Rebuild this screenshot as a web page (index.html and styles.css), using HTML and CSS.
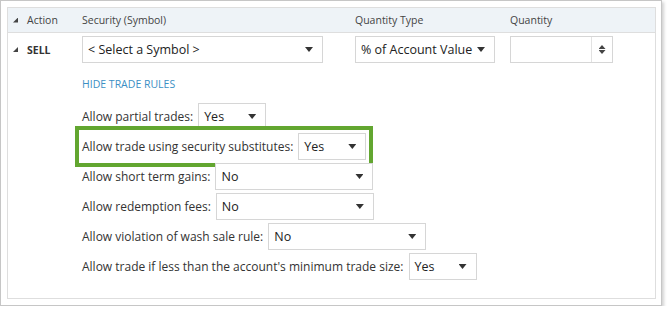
FILE: index.html
```html
<!DOCTYPE html>
<html lang="en">
<head>
    <meta charset="UTF-8">
    <title>Trade Rules</title>
    <link rel="stylesheet" href="styles.css">
</head>
<body>

    <div class="frame">
        <div class="panel">

            <!-- column headers -->
            <div class="head">
                <div class="col-action"><span class="tri"></span>Action</div>
                <div class="col-security">Security (Symbol)</div>
                <div class="col-qtype">Quantity Type</div>
                <div class="col-qty">Quantity</div>
            </div>

            <!-- trade row -->
            <div class="trade">
                <div class="col-action sell"><span class="tri"></span>SELL</div>
                <div class="col-security">
                    <div class="dd w-symbol"><span class="val">&lt; Select a Symbol &gt;</span><span class="caret"></span></div>
                </div>
                <div class="col-qtype">
                    <div class="dd w-qtype"><span class="val">% of Account Value</span><span class="caret"></span></div>
                </div>
                <div class="col-qty">
                    <div class="spin">
                        <span class="spin-field"></span>
                        <span class="spin-btn"><span class="up"></span><span class="down"></span></span>
                    </div>
                </div>
            </div>

            <div class="rules">
                <a class="hide-link">HIDE TRADE RULES</a>

                <div class="rule">
                    <label>Allow partial trades:</label>
                    <div class="dd w-short"><span class="val">Yes</span><span class="caret"></span></div>
                </div>

                <div class="rule highlight">
                    <label>Allow trade using security substitutes:</label>
                    <div class="dd w-short"><span class="val">Yes</span><span class="caret"></span></div>
                </div>

                <div class="rule">
                    <label>Allow short term gains:</label>
                    <div class="dd w-long"><span class="val">No</span><span class="caret"></span></div>
                </div>

                <div class="rule">
                    <label>Allow redemption fees:</label>
                    <div class="dd w-long"><span class="val">No</span><span class="caret"></span></div>
                </div>

                <div class="rule">
                    <label>Allow violation of wash sale rule:</label>
                    <div class="dd w-long"><span class="val">No</span><span class="caret"></span></div>
                </div>

                <div class="rule">
                    <label>Allow trade if less than the account's minimum trade size:</label>
                    <div class="dd w-short"><span class="val">Yes</span><span class="caret"></span></div>
                </div>
            </div>

        </div>
    </div>

</body>
</html>
```

FILE: styles.css
```css
* { margin: 0; padding: 0; box-sizing: border-box; }

body {
    background: #ffffff;
    font-family: 'Open Sans', 'Noto Sans', sans-serif;
    color: #333333;
}

.frame {
    width: 662px;
    height: 306px;
    border: 1px solid #c6c6c6;
    box-shadow: 2px 2px 3px rgba(0, 0, 0, 0.18);
    padding: 6px 5px 6px 6px;
}

.panel {
    height: 100%;
    border: 1px solid #dedede;
}

/* header + trade row share the same columns */
.head, .trade {
    display: flex;
    align-items: center;
}

.head {
    height: 25px;
    background: #eef3f7;
    border-bottom: 1px solid #dedede;
    font-size: 10.5px;
    color: #444;
}

.col-action {
    width: 74px;
    padding-left: 5px;
    display: flex;
    align-items: center;
}
.col-security { width: 273px; }
.col-qtype { width: 155px; }
.col-qty { flex: 1; }

.tri {
    width: 5px;
    height: 5px;
    margin-right: 9px;
    background: #444;
    clip-path: polygon(100% 0, 100% 100%, 0 100%);
}

.trade {
    padding-top: 3px;
}

.sell {
    font-size: 10.5px;
    font-weight: bold;
    color: #333;
}

/* dropdowns */
.dd {
    height: 27px;
    border: 1px solid #d6d6d6;
    background: #fff;
    display: flex;
    align-items: center;
    justify-content: space-between;
    padding: 0 9px 0 5px;
    font-size: 12.5px;
    color: #222;
    white-space: nowrap;
}

.caret {
    width: 8px;
    height: 5px;
    background: #333;
    clip-path: polygon(0 0, 100% 0, 50% 100%);
}

.w-symbol { width: 241px; }
.w-qtype { width: 140px; }
.w-short { width: 68px; }
.w-long { width: 158px; }

/* numeric spinner */
.spin {
    width: 103px;
    height: 27px;
    border: 1px solid #d6d6d6;
    display: flex;
}
.spin-field { flex: 1; }
.spin-btn {
    width: 21px;
    border-left: 1px solid #e2e2e2;
    display: flex;
    flex-direction: column;
    align-items: center;
    justify-content: center;
    gap: 1px;
}
.up, .down {
    width: 7px;
    height: 4px;
    background: #444;
}
.up { clip-path: polygon(50% 0, 100% 100%, 0 100%); }
.down { clip-path: polygon(0 0, 100% 0, 50% 100%); }

/* trade rules */
.rules {
    padding-left: 74px;
    display: flex;
    flex-direction: column;
    align-items: flex-start;
    gap: 3px;
}

.hide-link {
    font-size: 10.5px;
    color: #3b8fc4;
    margin: 14px 0 8px;
    line-height: 15px;
}

.rule {
    display: flex;
    align-items: center;
    gap: 5px;
    font-size: 12px;
    color: #333;
}

.highlight {
    outline: 4px solid #62a630;
    outline-offset: 3px;
}
```
